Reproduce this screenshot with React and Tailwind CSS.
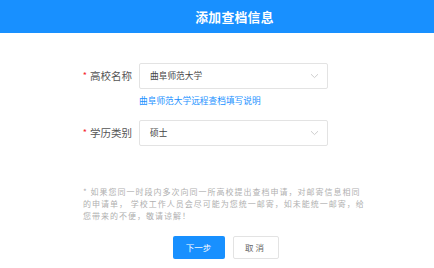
import React from "react";

function Chevron() {
  return (
    <svg width="9" height="6" viewBox="0 0 9 6" fill="none">
      <path d="M1 1.2L4.5 4.6L8 1.2" stroke="#c8c8c8" strokeWidth="0.9" />
    </svg>
  );
}

function Row({ label, value }) {
  return (
    <div className="flex items-center">
      <div className="w-[56px] flex items-center justify-end text-[10.5px] text-[#555]">
        <span className="text-[#f5222d] mr-[3px] text-[9px]">*</span>
        <span>{label}</span>
      </div>
      <div className="ml-[7px] w-[189px] h-[26px] border border-[#e3e3e3] rounded-[2px] bg-white flex items-center justify-between pl-[10px] pr-[8px]">
        <span className="text-[8.7px] text-[#444]">{value}</span>
        <Chevron />
      </div>
    </div>
  );
}

export default function App() {
  return (
    <div
      className="w-[434px] h-[268px] bg-white overflow-hidden"
      style={{ fontFamily: '"Noto Sans CJK SC", "Noto Sans", sans-serif' }}
    >
      <div className="h-[33px] bg-[#1890ff] flex items-center justify-center pl-[35px]">
        <span className="text-white font-bold text-[12.8px] tracking-[0.3px]">添加查档信息</span>
      </div>
      <div className="pl-[76px] pt-[30px]">
        <Row label="高校名称" value="曲阜师范大学" />
        <div className="ml-[63px] mt-[7px] text-[8.7px] text-[#1890ff] leading-[10px]">曲阜师范大学远程查档填写说明</div>
        <div className="mt-[14px]">
          <Row label="学历类别" value="硕士" />
        </div>
      </div>
      <div className="pl-[83px] mt-[40px] text-[8px] leading-[12px] text-[#b0b0b0] tracking-[1px]">
        <div>* 如果您同一时段内多次向同一所高校提出查档申请，对邮寄信息相同</div>
        <div>的申请单， 学校工作人员会尽可能为您统一邮寄，如未能统一邮寄，给</div>
        <div>您带来的不便，敬请谅解！</div>
      </div>
      <div className="flex justify-center gap-[8px] mt-[14px] pl-[17px]">
        <button className="w-[52px] h-[23px] rounded-[2px] bg-[#1890ff] text-white text-[8.5px]">下一步</button>
        <button className="w-[46px] h-[23px] rounded-[2px] border border-[#e3e3e3] bg-white text-[#666] text-[8.5px] tracking-[2px]">取消</button>
      </div>
    </div>
  );
}
